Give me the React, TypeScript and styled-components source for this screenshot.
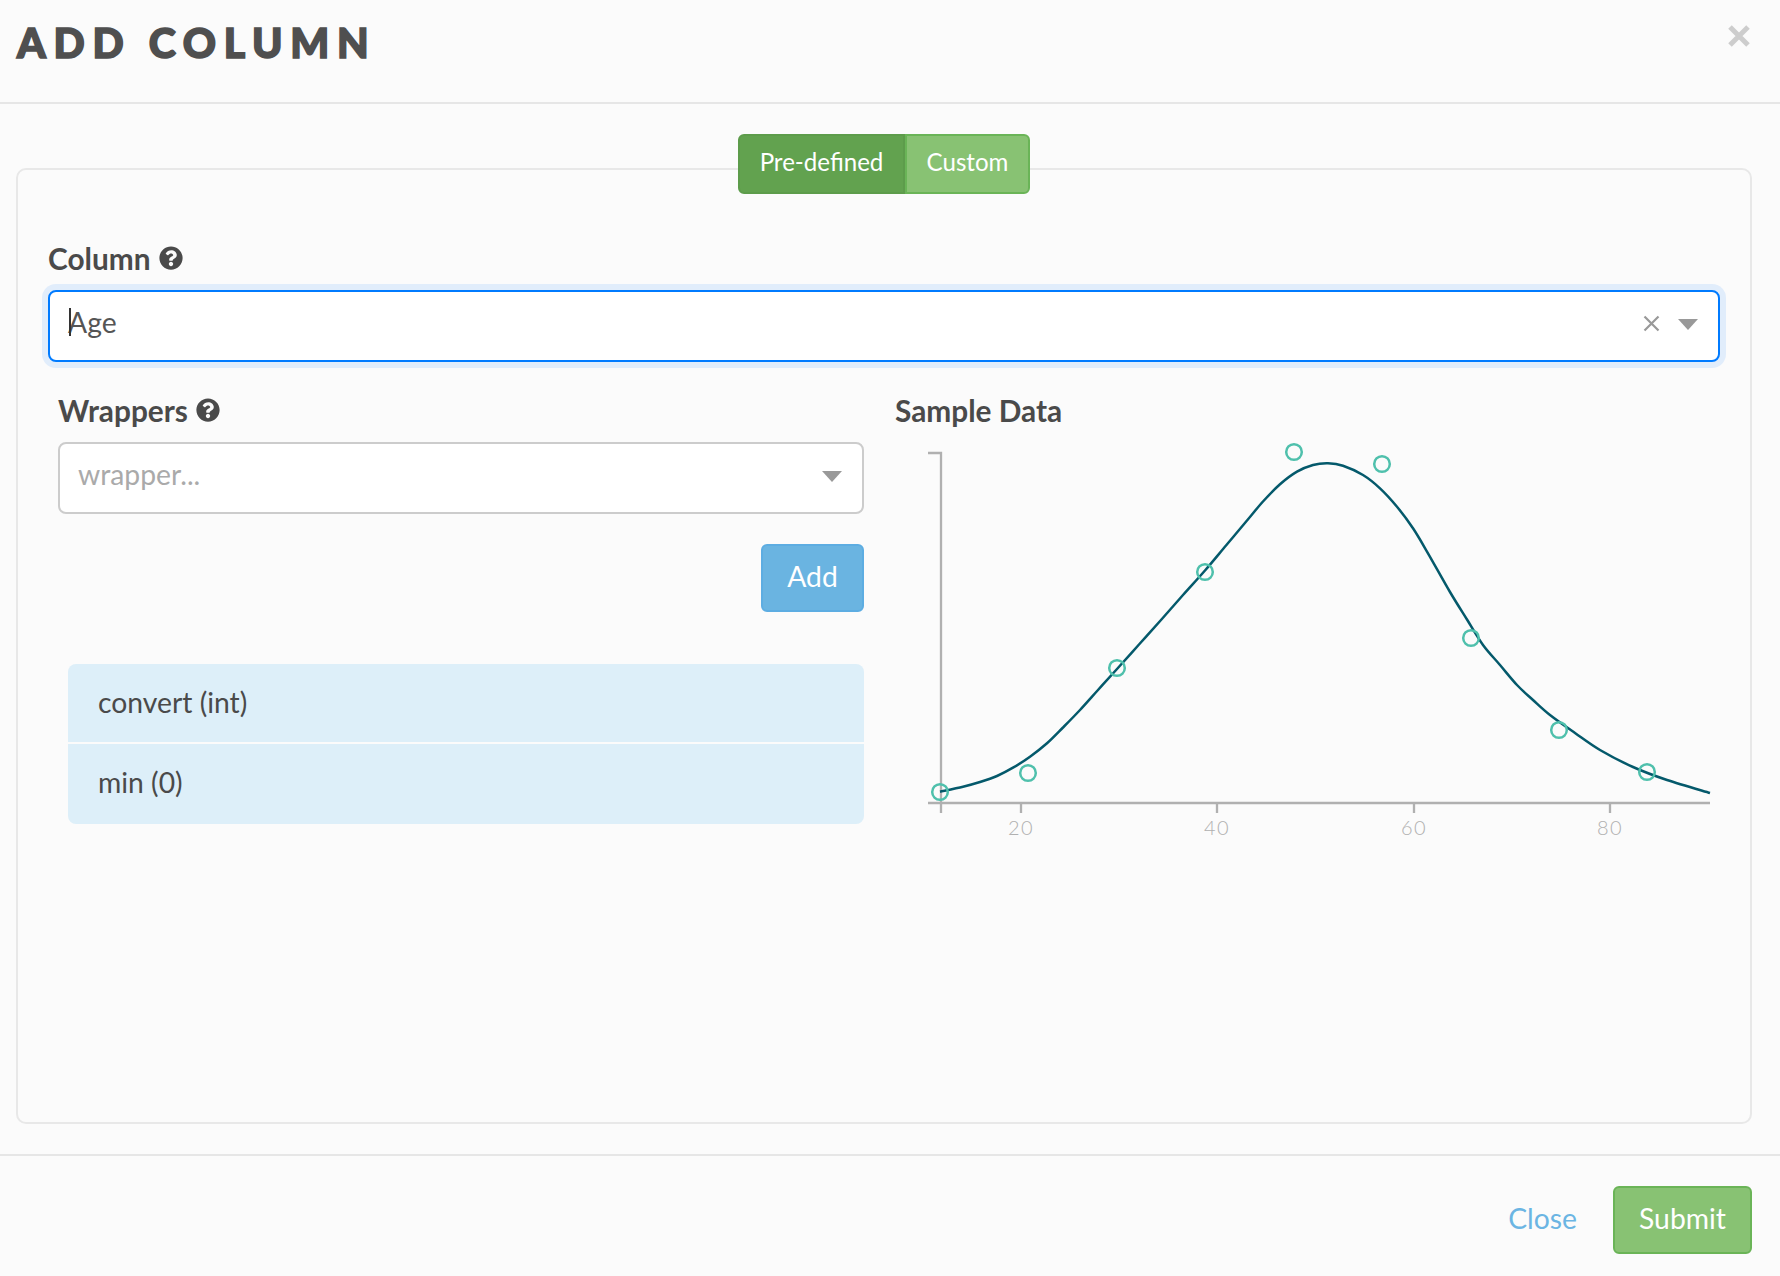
import React from "react";
import styled, { createGlobalStyle } from "styled-components";
import { FaQuestionCircle } from "react-icons/fa";

const curve: [number, number][] = [
  [940, 791.7], [963, 786.7], [980, 782], [997, 776], [1013, 767.7], [1030, 756.7],
  [1047, 743.3], [1063, 727.5], [1080, 710], [1098, 690], [1117, 669], [1139, 644.5],
  [1161, 620], [1183, 595], [1205, 570.5], [1226, 545.5], [1247, 520.5], [1263, 501.5],
  [1280, 484.3], [1297, 471.7], [1313, 465], [1328, 463.3], [1343, 465.7], [1363, 475],
  [1380, 488.3], [1397, 506.7], [1413, 528.3], [1428, 553.3], [1450, 592], [1467, 619.5],
  [1483, 645], [1500, 665], [1517, 685], [1533, 700], [1550, 715], [1575, 733], [1600, 750],
  [1633, 767], [1667, 780], [1710, 793],
];

const dots: [number, number][] = [
  [940, 792], [1028, 773], [1117, 668], [1205, 572], [1294, 452],
  [1382, 464], [1471, 638], [1559, 730], [1647, 772],
];

const ticks = [
  { x: 1021, label: "20" },
  { x: 1217, label: "40" },
  { x: 1414, label: "60" },
  { x: 1610, label: "80" },
];

// catmull-rom through the traced points
const smoothPath = (pts: [number, number][]) => {
  let d = `M${pts[0][0]} ${pts[0][1]}`;
  for (let i = 0; i < pts.length - 1; i++) {
    const p0 = pts[Math.max(i - 1, 0)];
    const p1 = pts[i];
    const p2 = pts[i + 1];
    const p3 = pts[Math.min(i + 2, pts.length - 1)];
    const c1x = p1[0] + (p2[0] - p0[0]) / 6;
    const c1y = p1[1] + (p2[1] - p0[1]) / 6;
    const c2x = p2[0] - (p3[0] - p1[0]) / 6;
    const c2y = p2[1] - (p3[1] - p1[1]) / 6;
    d += ` C${c1x} ${c1y} ${c2x} ${c2y} ${p2[0]} ${p2[1]}`;
  }
  return d;
};

const App = () => {
  return (
    <>
      <GlobalStyle />
      <Modal>
        <Header>
          <Title>ADD COLUMN</Title>
          <CloseIcon viewBox="0 0 22 22">
            <path d="M2 2 L20 20 M20 2 L2 20" />
          </CloseIcon>
        </Header>

        <Body>
          <Toggle>
            <ToggleButton $active>Pre-defined</ToggleButton>
            <ToggleButton>Custom</ToggleButton>
          </Toggle>

          <Panel>
            <Label>
              Column <FaQuestionCircle size={24} />
            </Label>
            <FocusedSelect>
              <TextCaret />
              <SelectValue>Age</SelectValue>
              <ClearIcon viewBox="0 0 17 17">
                <path d="M1.5 1.5 L15.5 15.5 M15.5 1.5 L1.5 15.5" />
              </ClearIcon>
              <ColumnCaret />
            </FocusedSelect>

            <Columns>
              <LeftColumn>
                <Label>
                  Wrappers <FaQuestionCircle size={24} />
                </Label>
                <Select>
                  <Placeholder>wrapper...</Placeholder>
                  <ColumnCaret />
                </Select>
                <AddRow>
                  <AddButton>Add</AddButton>
                </AddRow>
                <WrapperList>
                  <WrapperItem>convert (int)</WrapperItem>
                  <WrapperItem>min (0)</WrapperItem>
                </WrapperList>
              </LeftColumn>

              <RightColumn>
                <Label>Sample Data</Label>
                <Chart viewBox="895 442 825 400">
                  <path d="M928 453 H941 V803" fill="none" stroke="#b0b0b0" strokeWidth="2.3" />
                  <path d="M928 803 H1710" fill="none" stroke="#b0b0b0" strokeWidth="2.3" />
                  <path d="M941 803 V813" fill="none" stroke="#b0b0b0" strokeWidth="2.3" />
                  {ticks.map((tick) => (
                    <g key={tick.label}>
                      <path d={`M${tick.x} 803 V813`} fill="none" stroke="#b0b0b0" strokeWidth="2.3" />
                      <TickLabel x={tick.x} y="835" textAnchor="middle">
                        {tick.label}
                      </TickLabel>
                    </g>
                  ))}
                  <path d={smoothPath(curve)} fill="none" stroke="#04596b" strokeWidth="2.5" />
                  {dots.map(([cx, cy]) => (
                    <circle key={cx} cx={cx} cy={cy} r="7.8" fill="none" stroke="#4fc0ac" strokeWidth="2.5" />
                  ))}
                </Chart>
              </RightColumn>
            </Columns>
          </Panel>
        </Body>

        <Footer>
          <CloseLink>Close</CloseLink>
          <SubmitButton>Submit</SubmitButton>
        </Footer>
      </Modal>
    </>
  );
};

const GlobalStyle = createGlobalStyle`
  html, body {
    margin: 0;
    padding: 0;
    background: #fbfbfb;
  }
  body {
    font-family: Lato, "Liberation Sans", sans-serif;
    color: #4a4a4a;
  }
`;

const Modal = styled.div`
  width: 1780px;
  height: 1276px;
  background: #fbfbfb;
  box-sizing: border-box;
  overflow: hidden;
`;

const Header = styled.div`
  display: flex;
  justify-content: space-between;
  align-items: flex-start;
  height: 104px;
  box-sizing: border-box;
  padding: 25px 30px 0 17px;
  border-bottom: 2px solid #e6e6e6;
`;

const Title = styled.h1`
  margin: -6px 0 0;
  font-family: Lato, "Liberation Sans", sans-serif;
  font-size: 41px;
  line-height: 48px;
  font-weight: 900;
  letter-spacing: 7.7px;
  color: #4f4f4f;
  -webkit-text-stroke: 1.6px #4f4f4f;
`;

const CloseIcon = styled.svg`
  width: 22px;
  height: 22px;
  fill: none;
  stroke: #cdcdcd;
  stroke-width: 5;
`;

const Body = styled.div`
  display: flex;
  flex-direction: column;
  padding: 30px 28px 30px 16px;
  border-bottom: 2px solid #e6e6e6;
  height: 1052px;
  box-sizing: border-box;
`;

const Toggle = styled.div`
  display: flex;
  align-self: center;
  position: relative;
  z-index: 1;
  height: 60px;
`;

const ToggleButton = styled.div<{ $active?: boolean }>`
  display: flex;
  align-items: center;
  justify-content: center;
  box-sizing: border-box;
  width: ${(p) => (p.$active ? "167px" : "125px")};
  padding-bottom: 6px;
  font-size: 24.1px;
  color: #fff;
  background: ${(p) => (p.$active ? "#62a24f" : "#88c273")};
  border: 2px solid ${(p) => (p.$active ? "#5d9c4b" : "#6ab457")};
  border-radius: ${(p) => (p.$active ? "6px 0 0 6px" : "0 6px 6px 0")};
`;

const Panel = styled.div`
  margin-top: -26px;
  height: 956px;
  box-sizing: border-box;
  padding: 70px 30px 0 30px;
  border: 2px solid #e8e8e8;
  border-radius: 10px;
`;

const Label = styled.div`
  display: flex;
  align-items: center;
  gap: 8px;
  height: 36px;
  font-size: 29.8px;
  font-weight: 700;
  color: #4a4a4a;
  white-space: nowrap;
`;

const Select = styled.div`
  display: flex;
  align-items: center;
  box-sizing: border-box;
  height: 72px;
  margin-top: 14px;
  padding: 0 20px 0 18px;
  background: #fff;
  border: 2px solid #cccccc;
  border-radius: 8px;
`;

const FocusedSelect = styled(Select)`
  position: relative;
  border-color: #007bff;
  box-shadow: 0 0 0 6px #e1edfb;
`;

const TextCaret = styled.span`
  position: absolute;
  left: 19px;
  top: 16px;
  width: 2px;
  height: 28px;
  background: #333;
`;

const SelectValue = styled.span`
  flex: 1;
  padding-bottom: 8px;
  font-size: 28.3px;
  color: #555;
`;

const Placeholder = styled(SelectValue)`
  color: #aaa;
`;

const ClearIcon = styled.svg`
  width: 17px;
  height: 17px;
  margin: 0 18px 6px 0;
  fill: none;
  stroke: #999;
  stroke-width: 2.2;
`;

const ColumnCaret = styled.span`
  width: 0;
  height: 0;
  margin-bottom: 3px;
  border-left: 10px solid transparent;
  border-right: 10px solid transparent;
  border-top: 11px solid #999;
`;

const Columns = styled.div`
  display: flex;
  gap: 31px;
  margin: 30px 0 0 10px;
`;

const LeftColumn = styled.div`
  width: 806px;
  flex: none;
`;

const RightColumn = styled.div`
  flex: 1;
`;

const AddRow = styled.div`
  display: flex;
  justify-content: flex-end;
  margin-top: 30px;
`;

const AddButton = styled.div`
  display: flex;
  align-items: center;
  justify-content: center;
  box-sizing: border-box;
  width: 103px;
  height: 68px;
  padding-bottom: 4px;
  font-size: 28.3px;
  color: #fff;
  background: #6ab4e1;
  border: 2px solid #5dade2;
  border-radius: 6px;
`;

const WrapperList = styled.div`
  margin: 52px 0 0 10px;
  border-radius: 8px;
  overflow: hidden;
`;

const WrapperItem = styled.div`
  display: flex;
  align-items: center;
  height: 78px;
  padding: 0 30px 2px;
  box-sizing: border-box;
  font-size: 28.3px;
  color: #4a4a4a;
  background: #ddeff9;

  & + & {
    height: 80px;
    margin-top: 2px;
    padding-bottom: 4px;
  }
`;

const Chart = styled.svg`
  display: block;
  width: 825px;
  height: 400px;
  margin-top: 14px;
`;

const TickLabel = styled.text`
  font-family: Lato, "Liberation Sans", sans-serif;
  font-size: 20px;
  font-weight: 300;
  letter-spacing: 1.5px;
  fill: #b0b0b0;
`;

const Footer = styled.div`
  display: flex;
  align-items: center;
  justify-content: flex-end;
  gap: 36px;
  padding: 30px 28px 0 0;
`;

const CloseLink = styled.div`
  padding-bottom: 4px;
  font-size: 28.3px;
  color: #6bb5e3;
`;

const SubmitButton = styled.div`
  display: flex;
  align-items: center;
  justify-content: center;
  box-sizing: border-box;
  width: 139px;
  height: 68px;
  padding-bottom: 4px;
  font-size: 28.3px;
  color: #fff;
  background: #88c273;
  border: 2px solid #6ab457;
  border-radius: 6px;
`;

export default App;
